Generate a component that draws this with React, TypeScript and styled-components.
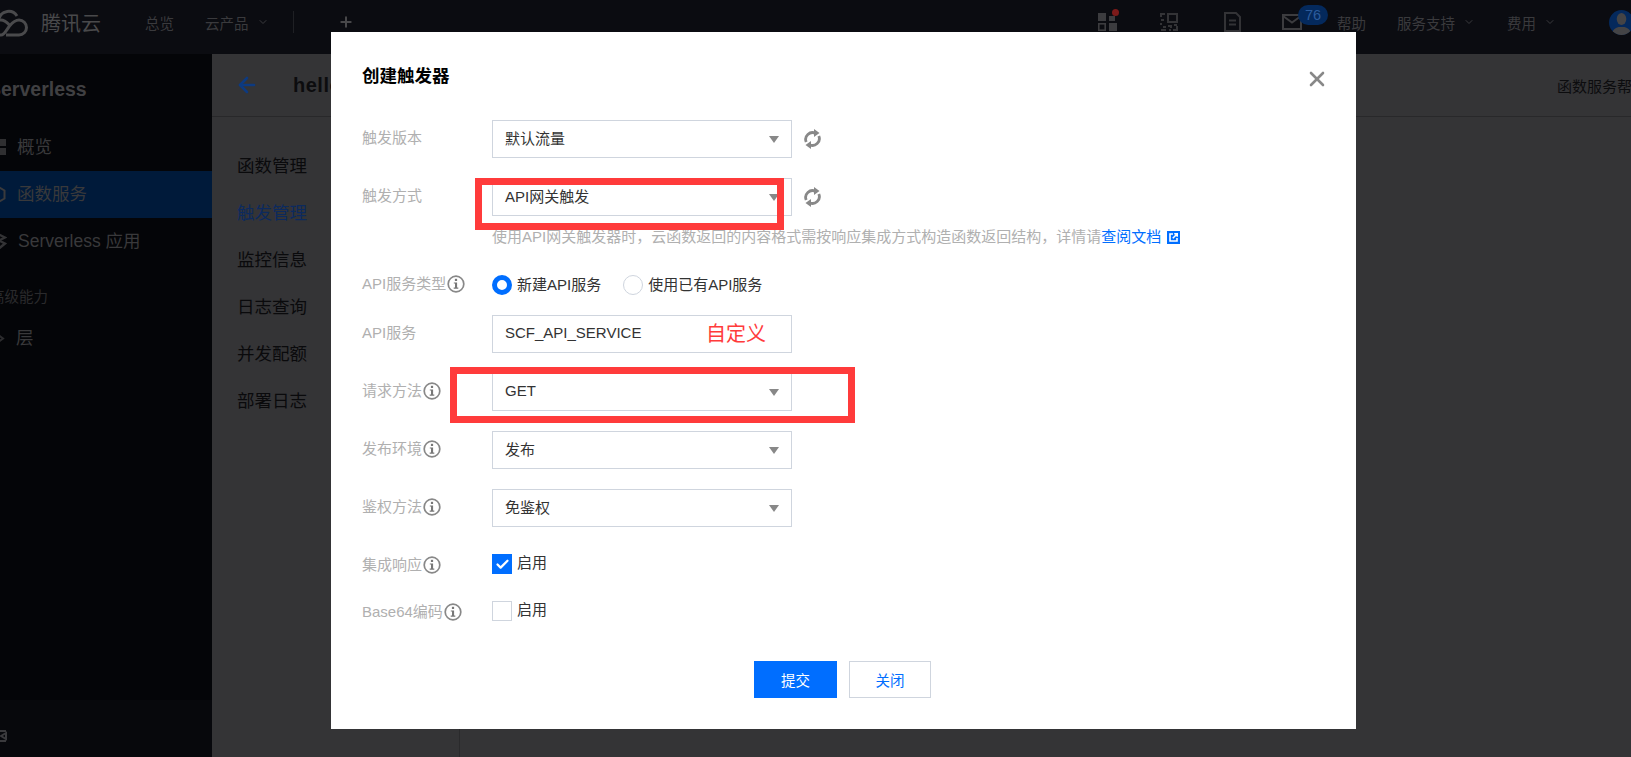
import React from "react";
import styled, { createGlobalStyle } from "styled-components";
import { ArrowLeft, ChevronDown, Plus, X, Check } from "lucide-react";

const Global = createGlobalStyle`
  html, body { margin: 0; padding: 0; height: 100%; overflow: hidden; background: #343436; }
  * { box-sizing: border-box; }
  body { font-family: "Liberation Sans", "Noto Sans CJK SC", sans-serif; }
`;

const Page = styled.div`
  position: relative; width: 1631px; height: 757px; overflow: hidden;
  display: flex; flex-direction: column;
`;

const TopBar = styled.header`
  height: 54px; flex: none; background: #0b0c11; display: flex; align-items: center; overflow: hidden; padding-bottom: 10px;
`;
const Logo = styled.div`
  display: flex; align-items: center; gap: 13px; margin-left: -6px; width: 151px; flex: none;
`;
const LogoText = styled.span`
  font-size: 20px; color: #49494b; white-space: nowrap;
`;
const NavText = styled.span<{ $ml?: number }>`
  font-size: 14.5px; color: #3a3a3d; display: inline-flex; align-items: center; gap: 8px; white-space: nowrap;
  margin-left: ${(p) => p.$ml ?? 0}px;
`;
const NavDivider = styled.span`
  width: 1px; height: 22px; background: #1f2024; margin-left: 24px;
`;
const AddGlyph = styled.span`
  margin-left: 44px; color: #48484a; display: flex;
`;
const TopRight = styled.div`
  margin-left: auto; display: flex; align-items: center; height: 100%; width: 533px; flex: none;
`;
const IconSlot = styled.span<{ $w: number }>`
  position: relative; display: flex; width: ${(p) => p.$w}px; flex: none;
`;
const Dot = styled.i`
  position: absolute; left: 14px; top: -4px; width: 7px; height: 7px; border-radius: 50%; background: #7c1a1a;
`;
const Badge = styled.span`
  position: absolute; left: 16px; top: -9px; width: 30px; height: 20px; border-radius: 10px;
  background: #04295c; color: #2c5c9c; font-size: 14.5px; display: flex; align-items: center; justify-content: center;
`;
const Avatar = styled.span`
  margin-left: 53px; width: 25px; height: 25px; border-radius: 50%; background: #04295c; flex: none; overflow: hidden; display: flex;
`;

const Body = styled.div`
  flex: 1; display: flex; min-height: 0;
`;
const Sidebar = styled.aside`
  width: 212px; flex: none; background: #040508; display: flex; flex-direction: column; overflow: hidden;
`;
const SideTitle = styled.div`
  font-size: 19.5px; font-weight: 700; color: #404042; height: 40px; margin: 15px 0 0 -12px; display: flex; align-items: center;
`;
const SideItem = styled.div<{ $active?: boolean }>`
  height: 47px; display: flex; align-items: center; gap: 11px; padding-bottom: 4px;
  font-size: 17.5px; color: #39393b; white-space: nowrap;
  background: ${(p) => (p.$active ? "#001a3a" : "transparent")};
  svg { flex: none; margin-left: -9px; margin-top: 3px; }
`;
const SideList = styled.div<{ $mt: number }>`
  margin-top: ${(p) => p.$mt}px; display: flex; flex-direction: column;
`;
const SideGroup = styled.div`
  font-size: 14.5px; color: #2a2a2c; margin: 20px 0 0 -10px; height: 24px; display: flex; align-items: center; white-space: nowrap; padding-bottom: 3px;
`;
const SideFoot = styled.div`
  margin-top: auto; height: 57px; background: #07080c; display: flex; align-items: center; padding-top: 14px;
  color: #3a3a3d; flex: none;
`;

const Main = styled.main`
  flex: 1; display: flex; flex-direction: column; background: #343436; min-width: 0;
`;
const MainHead = styled.div`
  height: 63px; flex: none; display: flex; align-items: center; border-bottom: 1px solid #28282a; padding: 0 0 0 23px; color: #0d3a80;
`;
const HelloText = styled.span`
  font-size: 20px; font-weight: 700; color: #0c0c0e; margin-left: 34px; letter-spacing: 0.5px;
`;
const HelpText = styled.span`
  margin-left: auto; font-size: 15px; color: #0c0c0e; width: 74px; white-space: nowrap; overflow: hidden; flex: none;
`;
const MainBody = styled.div`
  flex: 1; display: flex; min-height: 0;
`;
const SubNav = styled.nav`
  width: 248px; flex: none; border-right: 1px solid #2a2a2c; padding-top: 26px; display: flex; flex-direction: column;
`;
const SubItem = styled.div<{ $active?: boolean }>`
  height: 47px; line-height: 47px; padding-left: 25px; font-size: 17.5px;
  color: ${(p) => (p.$active ? "#0c2a5e" : "#0a0a0c")};
`;

const Overlay = styled.div`
  position: absolute; inset: 0; padding: 32px 275px 28px 331px; display: flex;
`;
const Modal = styled.section`
  position: relative; flex: 1; background: #fff; padding: 0 31px; display: flex; flex-direction: column;
`;
const ModalTitle = styled.h2`
  margin: 0; height: 88px; flex: none; display: flex; align-items: center; font-size: 17.5px; font-weight: 700; color: #000; padding-bottom: 4px;
`;
const Close = styled.span`
  position: absolute; left: 974px; top: 35px; color: #888; display: flex;
`;
const Row = styled.div<{ $h?: number; $mb?: number }>`
  display: grid; grid-template-columns: 130px 1fr; grid-template-rows: minmax(0, 1fr); align-items: center;
  height: ${(p) => p.$h ?? 38}px; margin-bottom: ${(p) => p.$mb ?? 20}px; flex: none;
`;
const Label = styled.label<{ $tight?: boolean }>`
  font-size: 15px; color: #b0b0b0; display: flex; align-items: center; gap: 1px; white-space: nowrap;
  padding-bottom: ${(p) => (p.$tight ? 2 : 5)}px;
  svg { margin-top: 3px; }
`;
const Field = styled.div`
  display: flex; align-items: center; position: relative;
`;
const SelectBox = styled.div`
  width: 300px; height: 38px; border: 1px solid #cfd5de; padding: 0 12px 3px 12px; display: flex; align-items: center;
  font-size: 15px; color: #333; background: #fff; white-space: nowrap;
`;
const Caret = styled.i`
  margin: 3px 0 0 auto; width: 0; height: 0; border-left: 5px solid transparent; border-right: 5px solid transparent; border-top: 7px solid #888;
`;
const Refresh = styled.span`
  display: flex; margin-left: 12px; color: #888;
`;
const CustomNote = styled.span`
  position: absolute; left: 214px; top: 50%; transform: translateY(-50%); font-size: 20px; color: #ff3b3b; white-space: nowrap; padding-bottom: 4px;
`;
const Hint = styled.p`
  margin: -10px 0 22px 130px; height: 22px; line-height: 22px; font-size: 15px; color: #b0b0b0; white-space: nowrap; display: flex; align-items: center;
`;
const LinkText = styled.a`
  color: #006eff; display: inline-flex; align-items: center; gap: 6px;
`;
const RadioItem = styled.span`
  display: inline-flex; align-items: center; gap: 5px; font-size: 15px; color: #333; margin-right: 22px; white-space: nowrap;
`;
const RadioDot = styled.i<{ $on?: boolean }>`
  width: 20px; height: 20px; border-radius: 50%; flex: none; margin-top: 3px;
  border: ${(p) => (p.$on ? "5px solid #006eff" : "1px solid #cfd5de")}; background: #fff;
`;
const ChoiceRow = styled(Field)`
  padding-bottom: 3px;
`;
const CheckBox = styled.i<{ $on?: boolean }>`
  width: 20px; height: 20px; flex: none; display: flex; align-items: center; justify-content: center; color: #fff;
  background: ${(p) => (p.$on ? "#006eff" : "#fff")};
  border: 1px solid ${(p) => (p.$on ? "#006eff" : "#cfd5de")};
`;
const CheckText = styled.span`
  font-size: 15px; color: #333; margin-left: 5px; padding-bottom: 5px;
`;
const CheckRow = styled.div`
  display: flex; align-items: center; height: 20px;
`;
const Footer = styled.div`
  margin-top: 13px; padding-right: 2px; display: flex; justify-content: center; gap: 12px;
`;
const Button = styled.button<{ $primary?: boolean }>`
  width: ${(p) => (p.$primary ? 83 : 82)}px; height: 37px; font: inherit; font-size: 14.5px; padding: 0; border-radius: 0;
  background: ${(p) => (p.$primary ? "#006eff" : "#fff")};
  color: ${(p) => (p.$primary ? "#fff" : "#006eff")};
  border: 1px solid ${(p) => (p.$primary ? "#006eff" : "#cfd5de")};
`;
const Highlight = styled.div<{ $l: number; $t: number; $w: number; $h: number }>`
  position: absolute; left: ${(p) => p.$l}px; top: ${(p) => p.$t}px; width: ${(p) => p.$w}px; height: ${(p) => p.$h}px;
  border: 7px solid #ff3b3b; pointer-events: none;
`;

const Info = () => (
  <svg width="18" height="18" viewBox="0 0 18 18" fill="none">
    <circle cx="9" cy="9" r="7.8" stroke="#888" strokeWidth="1.7" />
    <rect x="7.900" y="3.800" width="2.200" height="2.200" fill="#777" />
    <path d="M6.800 7.400h3.300v5.200h1.200v1.200H6.700v-1.200H8V8.600H6.800z" fill="#777" />
  </svg>
);
const RefreshIcon = () => (
  <svg width="17" height="20" viewBox="0 0 17 20" fill="none">
    <path d="M2.200 13A6.800 6.800 0 0 1 11.500 4.300" stroke="#888" strokeWidth="2.800" />
    <path d="M14.800 7A6.800 6.800 0 0 1 5.500 15.700" stroke="#888" strokeWidth="2.800" />
    <path d="M10 0l5.500 4-5.500 4z" fill="#888" />
    <path d="M7 20l-5.500-4 5.500-4z" fill="#888" />
  </svg>
);
const LinkIcon = () => (
  <svg width="13" height="13" viewBox="0 0 13 13" fill="none">
    <rect width="13" height="13" fill="#006eff" />
    <path d="M6 3H3v7h7V7" stroke="#fff" strokeWidth="1.600" />
    <path d="M5.800 7.200L9.800 3.200M7.200 2.800h3v3" stroke="#fff" strokeWidth="1.600" />
  </svg>
);
const CloudLogo = () => (
  <svg width="34" height="30" viewBox="0 0 34 30" fill="none" stroke="#4a4a4c" strokeWidth="3">
    <path d="M5 11.500a10 10 0 0 1 18-2.500" />
    <path d="M12 28h13a7.500 7.500 0 0 0 0-15c-4.500 0-7 3-9.500 6S10.500 28 7 28a7.500 7.500 0 0 1 0-15c3.500 0 5.500 2 8 4.500" />
  </svg>
);
const GridIcon = () => (
  <svg width="19" height="18" viewBox="0 0 19 18" fill="#3c3c3f">
    <rect x="0" y="0" width="8" height="8" /><rect x="11" y="3" width="6" height="5" />
    <rect x="0.800" y="10.800" width="6.400" height="6.400" fill="none" stroke="#3c3c3f" strokeWidth="1.600" /><rect x="11" y="10" width="8" height="8" />
  </svg>
);
const QrIcon = () => (
  <svg width="18" height="18" viewBox="0 0 18 18" fill="none" stroke="#333336" strokeWidth="2">
    <path d="M5 1H1v3M1 7h3M1 10v2M1 17h5M9 17h2M13 17h4v-4M3 14h3" />
    <rect x="8" y="1" width="9" height="8" />
    <path d="M8 13h3v2M14 12h3" />
  </svg>
);
const DocIcon = () => (
  <svg width="17" height="20" viewBox="0 0 17 20" fill="none" stroke="#333336" strokeWidth="2">
    <path d="M1 1h11l4 4v14H1z" /><path d="M5 8.500h7M5 12.500h7" />
  </svg>
);
const MailIcon = () => (
  <svg width="20" height="16" viewBox="0 0 20 16" fill="none" stroke="#3c3c3f" strokeWidth="2">
    <rect x="1" y="1" width="18" height="14" /><path d="M1 2l9 6.500L19 2" />
  </svg>
);
const UserGlyph = () => (
  <svg width="25" height="25" viewBox="0 0 25 25" fill="#444446">
    <ellipse cx="12.500" cy="9" rx="4.800" ry="6" /><path d="M3 25c0-5 3-7 6.500-8h6c3.500 1 6.500 3 6.500 8z" />
  </svg>
);
const SquareGlyph = () => (
  <svg width="15" height="16" viewBox="0 0 15 16" fill="#2f2f31">
    <rect x="0" y="0" width="6" height="7" /><rect x="0" y="9" width="6" height="7" /><rect x="9" y="0" width="6" height="7" /><rect x="9" y="9" width="6" height="7" />
  </svg>
);
const HexGlyph = () => (
  <svg width="15" height="17" viewBox="0 0 15 17" fill="none" stroke="#3a3a3c" strokeWidth="2">
    <path d="M7.500 1l6 3.500v8l-6 3.500-6-3.500v-8z" />
  </svg>
);
const LayerGlyph = () => (
  <svg width="14" height="17" viewBox="0 0 14 17" fill="none" stroke="#2c2c2e" strokeWidth="2">
    <path d="M3 2l9 6.500-9 6.500" /><path d="M3 6l4 2.500L3 11" />
  </svg>
);
const AppGlyph = () => (
  <svg width="16" height="17" viewBox="0 0 16 17" fill="none" stroke="#333335" strokeWidth="2.400">
    <path d="M8 1.500l6 3-6 3-2-1M8 7.500l6 3-6 5-6-4" />
  </svg>
);
const FoldGlyph = () => (
  <svg width="14" height="14" viewBox="0 0 14 14" fill="none" stroke="#3a3a3d" strokeWidth="2">
    <path d="M-6 2h12M-6 12h12M6 4L1 7l5 3z" />
  </svg>
);

const Select = ({ value }: { value: string }) => (
  <SelectBox>{value}<Caret /></SelectBox>
);

export default function App() {
  return (
    <Page>
      <Global />
      <TopBar>
        <Logo><CloudLogo /><LogoText>腾讯云</LogoText></Logo>
        <NavText>总览</NavText>
        <NavText $ml={31}>云产品<ChevronDown size={12} /></NavText>
        <NavDivider />
        <AddGlyph><Plus size={16} strokeWidth={3} /></AddGlyph>
        <TopRight>
          <IconSlot $w={62}><GridIcon /><Dot /></IconSlot>
          <IconSlot $w={64}><QrIcon /></IconSlot>
          <IconSlot $w={58}><DocIcon /></IconSlot>
          <IconSlot $w={55}><MailIcon /><Badge>76</Badge></IconSlot>
          <NavText>帮助</NavText>
          <NavText $ml={31}>服务支持<ChevronDown size={12} /></NavText>
          <NavText $ml={32}>费用<ChevronDown size={12} /></NavText>
          <Avatar><UserGlyph /></Avatar>
        </TopRight>
      </TopBar>
      <Body>
        <Sidebar>
          <SideTitle>Serverless</SideTitle>
          <SideList $mt={15}>
            <SideItem><SquareGlyph />概览</SideItem>
            <SideItem $active><HexGlyph />函数服务</SideItem>
            <SideItem><AppGlyph />Serverless 应用</SideItem>
          </SideList>
          <SideGroup>高级能力</SideGroup>
          <SideList $mt={6}>
            <SideItem><LayerGlyph />层</SideItem>
          </SideList>
          <SideFoot><FoldGlyph /></SideFoot>
        </Sidebar>
        <Main>
          <MainHead>
            <ArrowLeft size={24} strokeWidth={2.6} />
            <HelloText>hello</HelloText>
            <HelpText>函数服务帮助</HelpText>
          </MainHead>
          <MainBody>
            <SubNav>
              <SubItem>函数管理</SubItem>
              <SubItem $active>触发管理</SubItem>
              <SubItem>监控信息</SubItem>
              <SubItem>日志查询</SubItem>
              <SubItem>并发配额</SubItem>
              <SubItem>部署日志</SubItem>
            </SubNav>
          </MainBody>
        </Main>
      </Body>
      <Overlay>
        <Modal>
          <ModalTitle>创建触发器</ModalTitle>
          <Close><X size={24} strokeWidth={2.6} /></Close>
          <Row>
            <Label>触发版本</Label>
            <Field><Select value="默认流量" /><Refresh><RefreshIcon /></Refresh></Field>
          </Row>
          <Row>
            <Label>触发方式</Label>
            <Field><Select value="API网关触发" /><Refresh><RefreshIcon /></Refresh></Field>
          </Row>
          <Hint>使用API网关触发器时，云函数返回的内容格式需按响应集成方式构造函数返回结构，详情请<LinkText>查阅文档<LinkIcon /></LinkText></Hint>
          <Row $h={30} $mb={15}>
            <Label>API服务类型<Info /></Label>
            <ChoiceRow>
              <RadioItem><RadioDot $on />新建API服务</RadioItem>
              <RadioItem><RadioDot />使用已有API服务</RadioItem>
            </ChoiceRow>
          </Row>
          <Row>
            <Label>API服务</Label>
            <Field><SelectBox>SCF_API_SERVICE</SelectBox><CustomNote>自定义</CustomNote></Field>
          </Row>
          <Row>
            <Label>请求方法<Info /></Label>
            <Field><Select value="GET" /></Field>
          </Row>
          <Row>
            <Label>发布环境<Info /></Label>
            <Field><Select value="发布" /></Field>
          </Row>
          <Row $mb={27}>
            <Label>鉴权方法<Info /></Label>
            <Field><Select value="免鉴权" /></Field>
          </Row>
          <Row $h={20} $mb={27}>
            <Label $tight>集成响应<Info /></Label>
            <CheckRow><CheckBox $on><Check size={15} strokeWidth={3.6} /></CheckBox><CheckText>启用</CheckText></CheckRow>
          </Row>
          <Row $h={20} $mb={27}>
            <Label $tight>Base64编码<Info /></Label>
            <CheckRow><CheckBox /><CheckText>启用</CheckText></CheckRow>
          </Row>
          <Footer>
            <Button $primary>提交</Button>
            <Button>关闭</Button>
          </Footer>
          <Highlight $l={144} $t={146} $w={309} $h={52} />
          <Highlight $l={119} $t={335} $w={405} $h={56} />
        </Modal>
      </Overlay>
    </Page>
  );
}
